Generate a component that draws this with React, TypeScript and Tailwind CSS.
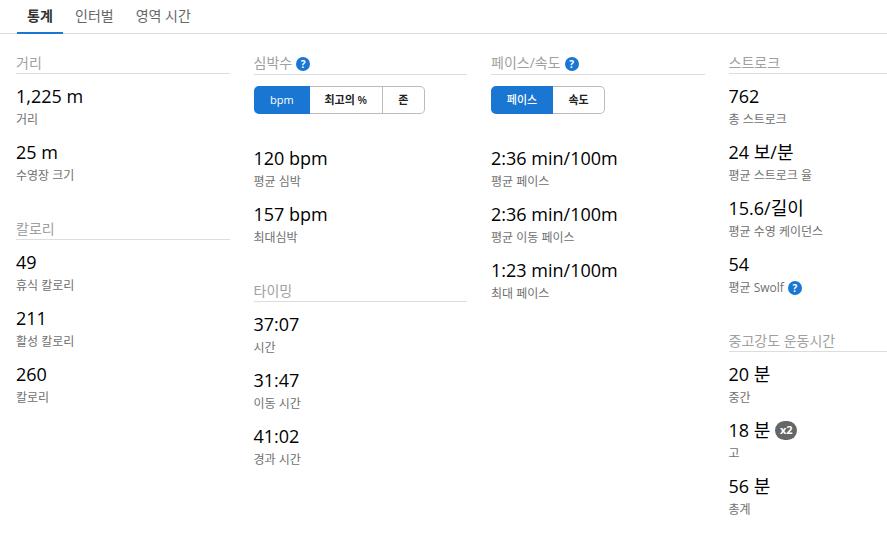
const font = { fontFamily: '"Open Sans","Noto Sans CJK KR",sans-serif' };

function Help({ shift }: { shift?: boolean }) {
  return (
    <span className={`inline-flex h-[14px] w-[14px] shrink-0 items-center justify-center rounded-full bg-[#1976d2] text-[10px] leading-none font-bold text-white ${shift ? "translate-y-[1px]" : ""}`}>?</span>
  );
}

function Heading({ title, help, first }: { title: string; help?: boolean; first?: boolean }) {
  return (
    <div className={`flex items-center gap-[4px] border-b border-[#dddddd] pb-[2px] text-[14px] text-[#a0a0a0] ${help ? "h-[22px]" : "h-[21px]"} ${first ? "" : "mt-[23px]"}`}>
      <span>{title}</span>
      {help && <Help shift />}
    </div>
  );
}

function Stat({ value, label, badge, help }: { value: string; label: string; badge?: boolean; help?: boolean }) {
  return (
    <div className="h-[56px]">
      <div className="flex h-[24px] items-center gap-[5px] text-[18px] leading-[24px] text-black">
        <span>{value}</span>
        {badge && (
          <span className="flex h-[19px] w-[22px] shrink-0 items-center justify-center rounded-full bg-[#666666] text-[11px] font-bold text-white">x2</span>
        )}
      </div>
      <div className="mt-[3px] flex h-[17px] items-center gap-[4px] text-[12px] leading-[17px] text-[#707070]">
        <span>{label}</span>
        {help && <Help />}
      </div>
    </div>
  );
}

function Toggle({ items }: { items: [string, number][] }) {
  return (
    <div className="mt-[11px] mb-[32px] flex h-[28px] w-fit">
      {items.map(([t, w], i) => (
        <div
          key={t}
          style={{ width: w }}
          className={`flex items-center justify-center text-[11px] ${
            i === 0
              ? "rounded-l-[5px] bg-[#1976d2] font-medium text-white"
              : `border-y border-r border-[#bbbbbb] font-semibold text-[#222222] ${i === items.length - 1 ? "rounded-r-[5px]" : ""}`
          }`}
        >
          {t}
        </div>
      ))}
    </div>
  );
}

function Items({ children }: { children: React.ReactNode }) {
  return <div className="pt-[10px]">{children}</div>;
}

export default function App() {
  return (
    <div style={font} className="h-[542px] w-[887px] overflow-hidden bg-white">
      <div className="flex h-[34px] items-start border-b border-[#dddddd]">
        <div className="ml-[17px] flex h-[34px] w-[46px] items-start justify-center border-b-2 border-[#1976d2] pt-[6px] text-[14px] leading-[20px] font-semibold text-[#333333]">통계</div>
        <div className="ml-[12px] pt-[6px] text-[14px] leading-[20px] text-[#666666]">인터벌</div>
        <div className="ml-[22px] pt-[6px] text-[14px] leading-[20px] text-[#666666]">영역 시간</div>
      </div>
      <div className="ml-[16px] flex w-[951px] gap-[24px] pt-[19px]">
        <div className="w-[213.5px] shrink-0">
          <Heading first title="거리" />
          <Items>
            <Stat value="1,225 m" label="거리" />
            <Stat value="25 m" label="수영장 크기" />
          </Items>
          <Heading title="칼로리" />
          <Items>
            <Stat value="49" label="휴식 칼로리" />
            <Stat value="211" label="활성 칼로리" />
            <Stat value="260" label="칼로리" />
          </Items>
        </div>
        <div className="w-[213.5px] shrink-0">
          <Heading first help title="심박수" />
          <Toggle items={[["bpm", 56.5], ["최고의 %", 72.5], ["존", 42.5]]} />
          <Stat value="120 bpm" label="평균 심박" />
          <Stat value="157 bpm" label="최대심박" />
          <Heading title="타이밍" />
          <Items>
            <Stat value="37:07" label="시간" />
            <Stat value="31:47" label="이동 시간" />
            <Stat value="41:02" label="경과 시간" />
          </Items>
        </div>
        <div className="w-[213.5px] shrink-0">
          <Heading first help title="페이스/속도" />
          <Toggle items={[["페이스", 62], ["속도", 52]]} />
          <Stat value="2:36 min/100m" label="평균 페이스" />
          <Stat value="2:36 min/100m" label="평균 이동 페이스" />
          <Stat value="1:23 min/100m" label="최대 페이스" />
        </div>
        <div className="w-[213.5px] shrink-0">
          <Heading first title="스트로크" />
          <Items>
            <Stat value="762" label="총 스트로크" />
            <Stat value="24 보/분" label="평균 스트로크 율" />
            <Stat value="15.6/길이" label="평균 수영 케이던스" />
            <Stat value="54" label="평균 Swolf" help />
          </Items>
          <Heading title="중고강도 운동시간" />
          <Items>
            <Stat value="20 분" label="중간" />
            <Stat value="18 분" label="고" badge />
            <Stat value="56 분" label="총계" />
          </Items>
        </div>
      </div>
    </div>
  );
}
